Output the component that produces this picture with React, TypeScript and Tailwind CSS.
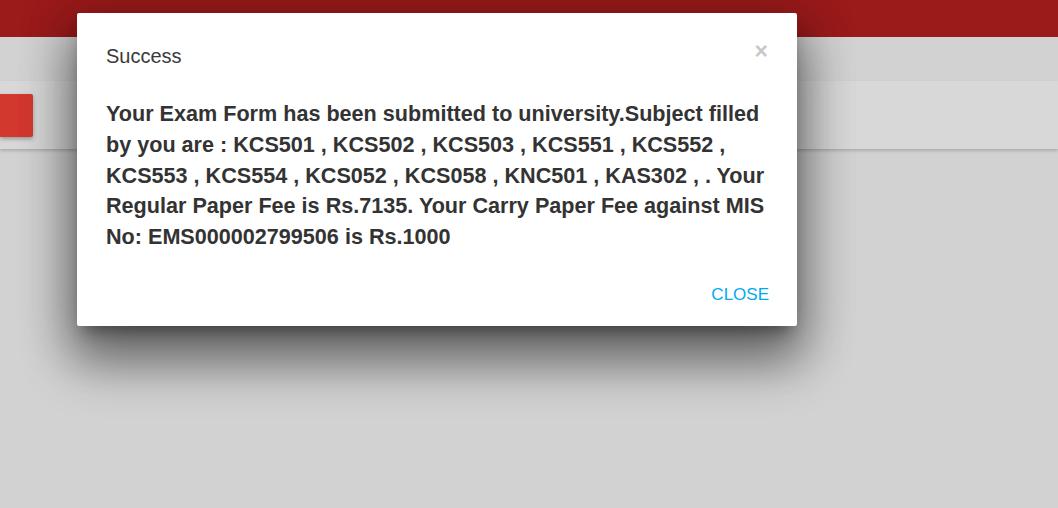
export default function App() {
  return (
    <div className="relative h-[508px] w-[1058px] overflow-hidden bg-[#d2d2d2] font-['Liberation_Sans',Arial,sans-serif]">
      <header className="h-[37px] bg-[#9b1a1a]" />
      <div className="mt-[44px] flex h-[68px] items-start bg-[#d8d8d8] pt-[13px] shadow-[0_2px_3px_rgba(0,0,0,0.18)]">
        <button className="h-[43px] w-[33px] rounded-r-[2px] bg-[#d2382e] shadow-[0_2px_4px_rgba(0,0,0,0.3)]" />
      </div>

      <div className="absolute left-[77px] top-[13px] w-[720px] rounded-[2px] bg-white pl-[29px] pr-[24px] pt-[30px] pb-[20px] shadow-[0_34px_50px_4px_rgba(0,0,0,0.42),0_10px_50px_10px_rgba(0,0,0,0.22),0_11px_15px_-7px_rgba(0,0,0,0.4)]">
        <div className="flex items-center justify-between">
          <h4 className="text-[20px] leading-[26px] text-[#3a3a3a]">Success</h4>
          <button className="-mt-[10px] mr-[5px] text-[23px] leading-none font-bold text-[#c8c8c8]">×</button>
        </div>
        <p className="mt-[30px] text-[21.6px] leading-[30.75px] font-bold text-[#333]">
          Your Exam Form has been submitted to university.Subject filled by you are : KCS501 , KCS502 , KCS503 , KCS551 , KCS552 , KCS553 , KCS554 , KCS052 , KCS058 , KNC501 , KAS302 , . Your Regular Paper Fee is Rs.7135. Your Carry Paper Fee against MIS No: EMS000002799506 is Rs.1000
        </p>
        <div className="mt-[31px] flex justify-end pr-[4px]">
          <button className="text-[17px] leading-[22px] text-[#03a9f4]">CLOSE</button>
        </div>
      </div>
    </div>
  );
}
